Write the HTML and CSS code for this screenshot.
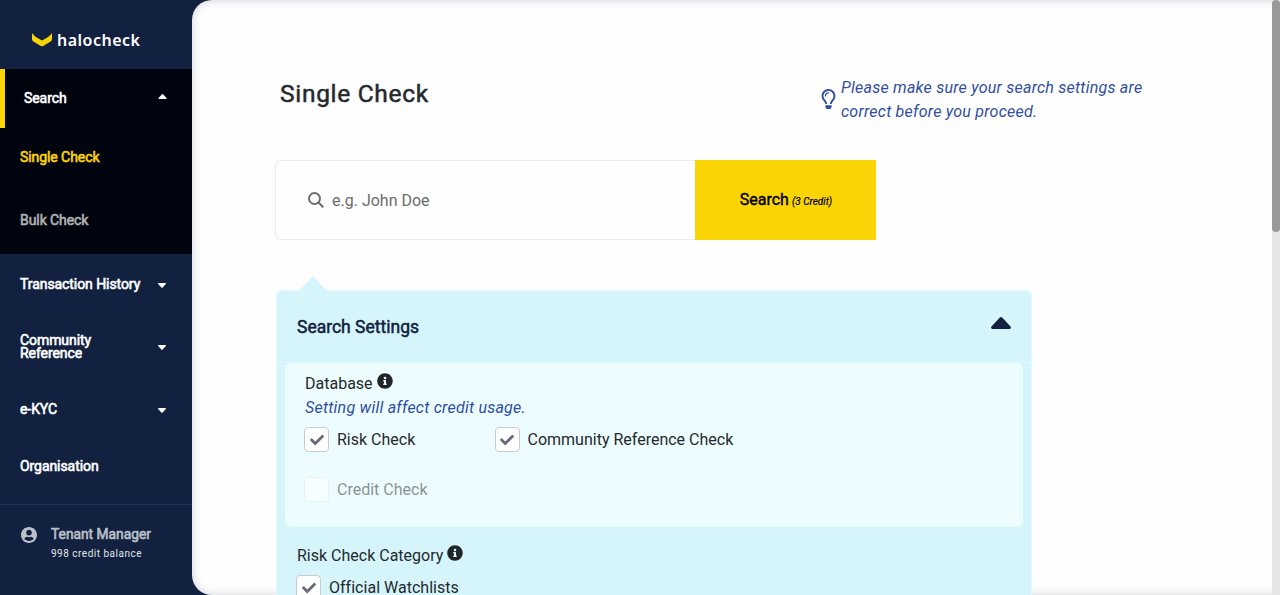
FILE: index.html
```html
<!DOCTYPE html>
<html lang="en">
<head>
<meta charset="utf-8">
<title>halocheck - Single Check</title>
<link rel="stylesheet" href="styles.css">
</head>
<body>
<svg class="defs" width="0" height="0">
  <symbol id="check" viewBox="0 0 512 512"><path d="M173.9 439.4L7.5 273c-10-10-10-26.200 0-36.200l36.200-36.200c10-10 26.200-10 36.200 0L192 312.700 432.100 72.600c10-10 26.200-10 36.200 0l36.200 36.200c10 10 10 26.200 0 36.200L210.100 439.400c-10 10-26.200 10-36.200 0z"/></symbol>
  <symbol id="info" viewBox="0 0 512 512"><path d="M256 8C119 8 8 119.100 8 256c0 137 111 248 248 248s248-111 248-248C504 119.100 393 8 256 8zm0 110c23.200 0 42 18.800 42 42s-18.800 42-42 42-42-18.800-42-42 18.800-42 42-42zm56 254c0 6.600-5.400 12-12 12h-88c-6.600 0-12-5.400-12-12v-24c0-6.600 5.400-12 12-12h12v-64h-12c-6.600 0-12-5.400-12-12v-24c0-6.600 5.400-12 12-12h64c6.600 0 12 5.400 12 12v100h12c6.600 0 12 5.400 12 12v24z"/></symbol>
  <symbol id="down" viewBox="0 0 8 5"><path d="M.4 0h7.200q.6.300.2.900L4.600 4.600q-.6.600-1.200 0L.2.900Q-.2.300.4 0z"/></symbol>
  <symbol id="up" viewBox="0 0 20 12"><path d="M1 12h18q1.500-1.200.5-2.500L11.200.6q-1.200-1-2.400 0L.5 9.500Q-.5 10.800 1 12z"/></symbol>
</svg>
<div class="app">
  <aside class="sidebar">
    <div class="logo">
      <svg width="20" height="14" viewBox="0 0 20 14"><path d="M0 0Q2 3.500 10 7.500Q18 3.500 20 0V6Q20 7.500 19 8.200L11.200 13q-1.200.7-2.400 0L1 8.200Q0 7.500 0 6z"/></svg>
      <span>halocheck</span>
    </div>
    <nav>
      <div class="group">
        <a class="item open"><span>Search</span><svg class="caret" width="9" height="5"><use href="#up"/></svg></a>
        <a class="item sub active">Single Check</a>
        <a class="item sub bulk">Bulk Check</a>
      </div>
      <a class="item history"><span>Transaction History</span><svg class="caret" width="8" height="5"><use href="#down"/></svg></a>
      <a class="item community"><span>Community<br>Reference</span><svg class="caret" width="8" height="5"><use href="#down"/></svg></a>
      <a class="item kyc"><span>e-KYC</span><svg class="caret" width="8" height="5"><use href="#down"/></svg></a>
      <a class="item org">Organisation</a>
    </nav>
    <div class="user">
      <svg width="16" height="16" viewBox="0 0 496 496"><path d="M248 0C111 0 0 111 0 248s111 248 248 248 248-111 248-248S385 0 248 0zm0 88c49 0 88 39 88 88s-39 88-88 88-88-39-88-88 39-88 88-88zm0 344c-59 0-111-26-146-67 19-35 56-59 98-59 15 0 24 8 48 8s33-8 48-8c42 0 79 24 98 59-35 41-87 67-146 67z"/></svg>
      <div><div class="name">Tenant Manager</div><div class="balance">998 credit balance</div></div>
    </div>
  </aside>
  <main class="main">
    <header class="head">
      <h1>Single Check</h1>
      <div class="tip">
        <svg width="15" height="20" viewBox="0 0 352 512"><path d="M176 80c-53 0-96 43-96 96 0 9 7 16 16 16s16-7 16-16c0-35 29-64 64-64 9 0 16-7 16-16s-7-16-16-16zM96 459c0 3 1 6 3 9l24 37c3 4 8 7 14 7h78c6 0 11-3 14-7l24-37c2-3 3-6 3-9v-43H96zM176 0C74 0 0 83 0 176c0 44 16 85 43 116 17 19 43 59 53 92h48c0-5-1-10-2-14-6-18-23-65-63-110-20-23-31-53-31-84 0-72 58-128 128-128s128 57 128 128c0 31-11 61-31 84-40 45-57 92-63 109-1 5-2 10-2 15h48c10-33 36-73 53-92 27-31 43-72 43-116C352 79 273 0 176 0z"/></svg>
        <p>Please make sure your search settings are<br>correct before you proceed.</p>
      </div>
    </header>
    <div class="search">
      <div class="field">
        <svg width="16" height="16" viewBox="0 0 16 16"><circle cx="6.500" cy="6.500" r="5.500"/><path d="M10.500 10.500L15.300 15.300"/></svg>
        <span>e.g. John Doe</span>
      </div>
      <div class="go"><span>Search</span> <i>(3 Credit)</i></div>
    </div>
    <div class="pointer"></div>
    <section class="panel">
      <div class="panel-head"><h2>Search Settings</h2><svg width="20" height="12"><use href="#up"/></svg></div>
      <div class="card">
        <div class="label">Database <svg width="16" height="16"><use href="#info"/></svg></div>
        <p class="note">Setting will affect credit usage.</p>
        <div class="checks">
          <div class="opt"><span class="box"><svg width="14" height="14"><use href="#check"/></svg></span><span>Risk Check</span></div>
          <div class="opt"><span class="box"><svg width="14" height="14"><use href="#check"/></svg></span><span>Community Reference Check</span></div>
          <div class="opt disabled"><span class="box"></span><span>Credit Check</span></div>
        </div>
      </div>
      <div class="category">
        <div class="label">Risk Check Category <svg width="16" height="16"><use href="#info"/></svg></div>
        <div class="opt"><span class="box"><svg width="14" height="14"><use href="#check"/></svg></span><span class="watch">Official Watchlists</span></div>
      </div>
    </section>
  </main>
  <div class="scrollbar"><div class="thumb"></div></div>
</div>
</body>
</html>
```
FILE: styles.css
```css
* { box-sizing: border-box; }
body { margin: 0; height: 595px; overflow: hidden; background: #11213f; color: #24292d; font: 16px/24px Roboto, sans-serif; }
h1, h2, p { margin: 0; }
svg { flex: none; display: block; }
.defs { position: absolute; }
.app { display: grid; grid-template-columns: 192px 1080px 8px; height: 595px; position: relative; }
.sidebar { display: flex; flex-direction: column; background: #11213f; color: #fff; }
.logo { height: 69px; display: flex; align-items: center; gap: 5px; padding: 13px 0 0 32px; font: 600 16px/24px "Noto Sans", sans-serif; }
.logo svg { fill: #fad405; margin-top: -2px; }
.logo span { letter-spacing: .5px; padding-bottom: 2px; }
.group { height: 185px; background: #00040f; }
.item { display: flex; align-items: center; justify-content: space-between; padding: 0 26px 1px 20px; font-size: 14px; line-height: 13px; font-weight: 400; letter-spacing: -.07px; -webkit-text-stroke: .6px currentColor; }
.caret { fill: #fff; stroke: none; margin-top: 2px; }
.open { height: 59px; border-left: 5px solid #fad405; padding: 0 25px 0 19px; }
.open .caret { margin: 0 0 4px; }
.sub { height: 59px; }
.active { color: #fad405; }
.bulk { height: 67px; color: #b0b0b0; }
.history { height: 61px; }
.community { height: 64px; }
.kyc { height: 61px; }
.community .caret { margin-top: 1px; }
.org { height: 54px; }
.user { border-top: 1px solid #1b3264; margin-top: 10px; padding: 17px 0 0 21px; display: flex; gap: 14px; color: #bbc0c9; }
.user svg { fill: #bbc0c9; margin-top: 5px; }
.name { font-size: 13.8px; -webkit-text-stroke: .6px currentColor; line-height: 24px; }
.balance { font-size: 10px; line-height: 15px; color: #e1e4e8; letter-spacing: .5px; }
.main { width: 1088px; height: 595px; overflow: hidden; background: #fefefe; border-radius: 20px 0 0 20px; box-shadow: inset 0 0 10px rgba(17,33,63,.2); padding: 75px 0 0 83px; }
.head { display: flex; height: 85px; justify-content: space-between; padding-right: 138px; }
h1 { font-size: 24.5px; font-weight: 400; -webkit-text-stroke: .5px currentColor; line-height: 37px; padding-left: 5px; letter-spacing: .7px; }
.tip { display: flex; gap: 5px; color: #304ea0; font-style: italic; width: 321px; letter-spacing: .24px; }
.tip p { white-space: nowrap; padding-top: 1px; }
.tip svg { fill: #304ea0; margin-top: 14px; }
.search { display: flex; width: 601px; height: 80px; }
.field { width: 420px; border: 1px solid #ebebed; border-right: 0; border-radius: 6px 0 0 6px; display: flex; align-items: center; gap: 8px; padding-left: 32px; color: #6c6c70; }
.field span { padding-top: 1px; }
.field svg { fill: none; stroke: #6c6c76; stroke-width: 2; }
.go { width: 181px; background: #fad405; display: flex; align-items: center; justify-content: center; gap: 3px; padding-left: 1px; color: #000; -webkit-text-stroke: .4px #000; }
.go i { font-size: 10px; padding-top: 4px; -webkit-text-stroke: .2px #000; }
.pointer { width: 28px; height: 15px; margin: 36px 0 0 24px; background: #d6f5fb; clip-path: polygon(50% 0, 100% 100%, 0 100%); }
.panel { width: 756px; height: 400px; margin: -1px 0 0 1px; background: #d6f5fb; border: 1px solid #e0fafd; border-radius: 6px; }
.panel-head { height: 72px; border-bottom: 1px solid #e0fafd; display: flex; align-items: center; justify-content: space-between; padding: 0 20px 0 20px; color: #11213f; }
h2 { font-size: 17.5px; font-weight: 400; -webkit-text-stroke: .5px currentColor; }
.panel-head svg { fill: #11213f; margin-bottom: 7px; }
.card { width: 738px; height: 164px; margin-left: 8px; background: #edfdff; border-radius: 6px; padding: 9px 0 0 20px; }
.label { display: flex; gap: 4px; height: 24px; }
.label svg { fill: #212529; margin-top: 1px; }
.note { color: #304ea0; font-style: italic; letter-spacing: .24px; }
.checks { display: grid; grid-template-columns: 190.5px 300px; grid-template-rows: 50px 50px; align-items: start; padding-top: 8px; }
.opt { display: flex; gap: 8px; }
.box { width: 25px; height: 25px; border: 1px solid #c6cdd0; border-radius: 4px; background: #fff; display: flex; align-items: center; justify-content: center; margin: -1px 0 0 -1px; }
.box svg { fill: #696b76; }
.disabled { opacity: .5; }
.disabled .box { border-color: #e0e8e9; }
.category { padding: 17px 0 0 20px; }
.category .opt { margin-top: 8px; }
.watch { letter-spacing: .02px; }
.scrollbar { background: #e5e5e6; z-index: 1; }
.thumb { height: 232px; background: #999; border-radius: 4px; }
```
